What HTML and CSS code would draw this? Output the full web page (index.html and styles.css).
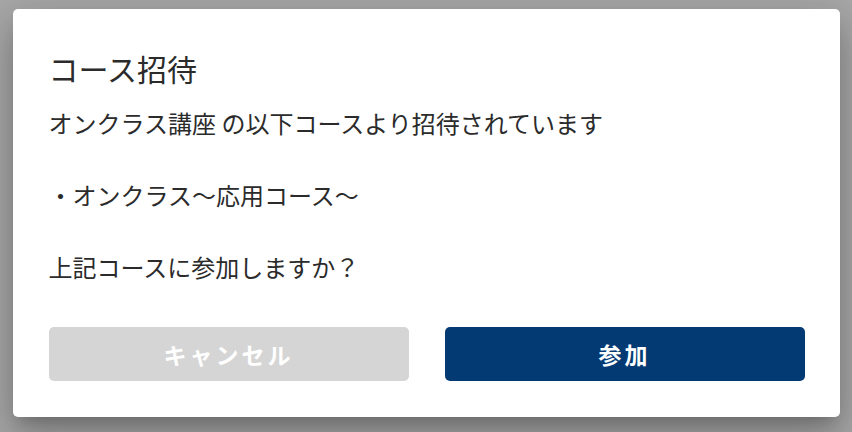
FILE: index.html
```html
<!DOCTYPE html>
<html lang="ja">
<head>
    <meta charset="UTF-8">
    <meta name="viewport" content="width=device-width, initial-scale=1.0">
    <title>コース招待</title>
    <link rel="stylesheet" href="styles.css">
</head>
<body>
    <div class="dialog">
        <h2 class="dialog-title">コース招待</h2>
        <p class="dialog-text">
            オンクラス講座 の以下コースより招待されています<br><br>
            ・オンクラス〜応用コース〜<br><br>
            上記コースに参加しますか？
        </p>
        <div class="dialog-actions">
            <button class="btn btn-cancel">キャンセル</button>
            <button class="btn btn-join">参加</button>
        </div>
    </div>
</body>
</html>
```

FILE: styles.css
```css
body {
    font-family: "Noto Sans CJK JP", "Noto Sans", sans-serif;
    background-color: #a8a8a8;
    color: #2b2b2b;
    margin: 0;
    padding: 9px 0 0;
    height: 432px;
    box-sizing: border-box;
    overflow: hidden;
}
.dialog {
    width: 827px;
    margin: 0 auto;
    background-color: #fff;
    border-radius: 5px;
    padding: 37px 35px 36px 36px;
    box-sizing: border-box;
    box-shadow: 0 11px 15px -7px rgba(0, 0, 0, 0.2), 0 24px 38px 3px rgba(0, 0, 0, 0.14), 0 9px 46px 8px rgba(0, 0, 0, 0.12);
}
.dialog-title {
    margin: 0;
    font-size: 30px;
    font-weight: 400;
    line-height: 44px;
    color: #2b2b2b;
}
.dialog-text {
    margin: 15px 0 0;
    font-size: 24px;
    line-height: 36px;
}
.dialog-actions {
    display: flex;
    gap: 36px;
    margin-top: 42px;
}
.btn {
    flex: 1;
    height: 54px;
    border: none;
    border-radius: 5px;
    font-family: inherit;
    font-size: 23px;
    font-weight: 700;
    color: #fff;
    letter-spacing: 3px;
    cursor: pointer;
}
.btn-cancel {
    background-color: #d5d5d5;
}
.btn-join {
    background-color: #033a74;
}
```
